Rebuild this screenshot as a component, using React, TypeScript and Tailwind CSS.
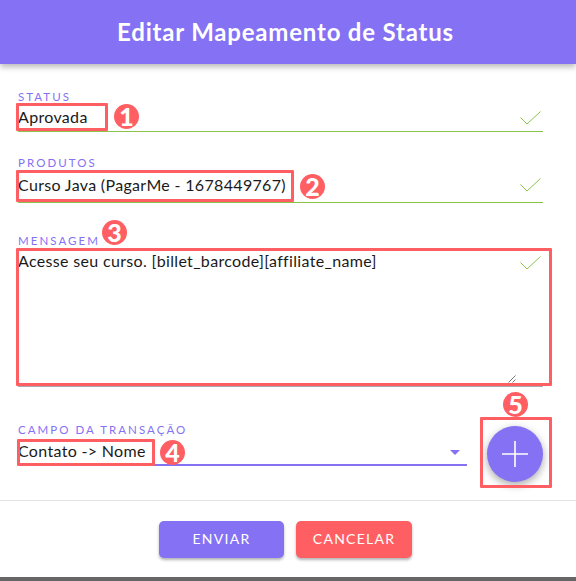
import React from "react";

const font = { fontFamily: 'Lato, "Noto Sans", sans-serif' };

function Check({ className = "" }: { className?: string }) {
  return (
    <svg className={className} width="21" height="14" viewBox="0 0 21 14" fill="none" stroke="#8bc34a" strokeWidth="1">
      <path d="M0.5 6.5 L7 13 L20.5 0.5" />
    </svg>
  );
}

function Mark({ n, className }: { n: string; className: string }) {
  return (
    <div className={`absolute w-[25px] h-[25px] rounded-full bg-[#ff5f63] text-white flex items-center justify-center text-[25px] font-black leading-none ${className}`}>
      {n}
    </div>
  );
}

function Box({ className }: { className: string }) {
  return <div className={`absolute border-[3px] border-[#ff5f63] rounded-[1px] pointer-events-none ${className}`} />;
}

function Label({ children }: { children: React.ReactNode }) {
  return <div className="text-[11.5px] leading-[12px] tracking-[2.05px] text-[#8571f3] uppercase">{children}</div>;
}

export default function App() {
  return (
    <div className="relative w-[576px] h-[581px] overflow-hidden bg-white flex flex-col text-[#1a1a1a]" style={font}>
      <div className="h-[64px] shrink-0 bg-[#8571f3] shadow-[0_3px_6px_rgba(0,0,0,0.28)] flex items-center justify-center text-white text-[24px] font-bold tracking-[0.8px] pr-[5px]">
        Editar Mapeamento de Status
      </div>

      <div className="flex-1 pl-[18px] pr-[33px] pt-[27px]">
        <Label>Status</Label>
        <div className="h-[29px] w-[525px] border-b border-[#8bc34a] flex items-center justify-between text-[16px] tracking-[0.33px]">
          <span>Aprovada</span>
          <Check className="mr-[2px] mt-[2px]" />
        </div>

        <div className="mt-[25px]"><Label>Produtos</Label></div>
        <div className="h-[34px] w-[525px] border-b border-[#8bc34a] flex items-center justify-between text-[16px] tracking-[0.33px] pb-[1px]">
          <span>Curso Java (PagarMe - 1678449767)</span>
          <Check className="mr-[2px]" />
        </div>

        <div className="mt-[32px]"><Label>Mensagem</Label></div>
        <div className="relative h-[140px] w-[525px] border-b border-[#aaaaaa] flex items-start justify-between text-[16px] tracking-[0.33px] pt-[2px]">
          <span>Acesse seu curso. [billet_barcode][affiliate_name]</span>
          <Check className="mr-[2px] mt-[7px]" />
          <svg className="absolute left-[490px] top-[128px]" width="9" height="9" viewBox="0 0 9 9" stroke="#777777" strokeWidth="1" fill="none">
            <path d="M0.5 7.5L7.5 0.5M4.5 7.5L7.5 4.5" />
          </svg>
        </div>

        <div className="mt-[37px] flex items-end">
          <div className="w-[449px]">
            <Label>Campo da Transação</Label>
            <div className="h-[30px] border-b-2 border-[#8571f3] flex items-center justify-between text-[16px] tracking-[0.33px] pr-[7px] pt-[2px]">
              <span>Contato -&gt; Nome</span>
              <div className="mt-[3px] w-0 h-0 border-x-[5px] border-x-transparent border-t-[5px] border-t-[#8571f3]" />
            </div>
          </div>
          <div className="ml-[20px] mb-[-16px] w-[56px] h-[56px] rounded-full bg-[#8571f3] shadow-[0_3px_8px_rgba(0,0,0,0.35)] flex items-center justify-center">
            <svg width="26" height="26" viewBox="0 0 26 26" stroke="white" strokeWidth="1.6">
              <path d="M13 0V26M0 13H26" />
            </svg>
          </div>
        </div>
      </div>

      <div className="h-[77px] shrink-0 border-t border-[#e3e3e3] flex justify-center gap-3 pt-[20px] pr-[5px]">
        <button className="w-[125px] h-[37px] rounded-[5px] bg-[#8571f3] text-white text-[14px] tracking-[1.25px] pb-[2px] shadow-[0_2px_3px_rgba(0,0,0,0.3)]">ENVIAR</button>
        <button className="w-[116px] h-[37px] rounded-[5px] bg-[#ff5f63] text-white text-[14px] tracking-[1.25px] pb-[2px] shadow-[0_2px_3px_rgba(0,0,0,0.3)]">CANCELAR</button>
      </div>
      <div className="h-[4px] shrink-0 bg-[#666666]" />

      <Box className="left-[16px] top-[103px] w-[92px] h-[28px]" />
      <Box className="left-[16px] top-[170px] w-[278px] h-[32px]" />
      <Box className="left-[16px] top-[248px] w-[536px] h-[138px]" />
      <Box className="left-[17px] top-[439px] w-[138px] h-[27px]" />
      <Box className="left-[480px] top-[417px] w-[72px] h-[71px]" />
      <Mark n="1" className="left-[114px] top-[104px]" />
      <Mark n="2" className="left-[300px] top-[174px]" />
      <Mark n="3" className="left-[102px] top-[220px]" />
      <Mark n="4" className="left-[160px] top-[440px]" />
      <Mark n="5" className="left-[503px] top-[392px]" />
    </div>
  );
}
